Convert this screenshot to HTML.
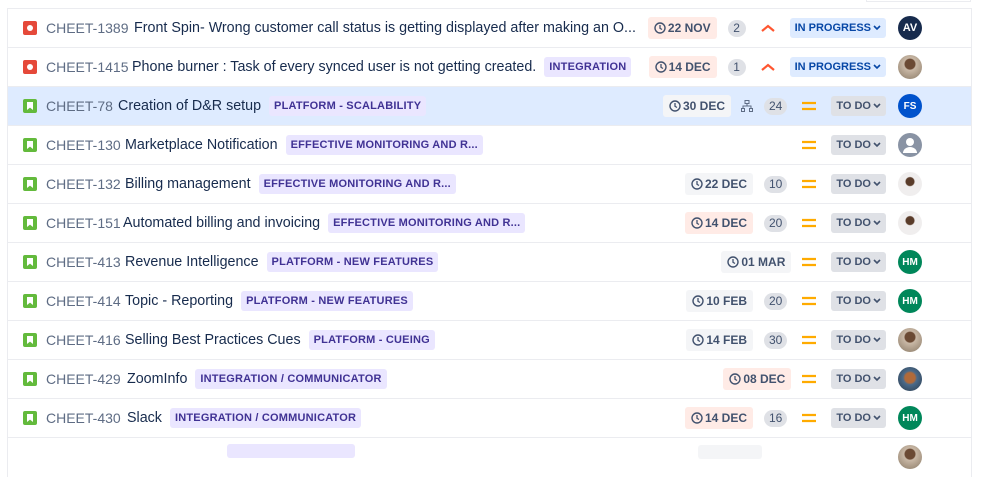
<!DOCTYPE html><html><head><style>
*{box-sizing:border-box;margin:0;padding:0}
body{width:999px;height:448px;overflow:hidden;background:#fff;font-family:"Liberation Sans",sans-serif;position:relative}
.wrap{position:absolute;left:7px;top:8px;width:965px;border-left:1px solid #ebecf0;border-right:1px solid #ebecf0;border-top:1px solid #ebecf0}
.row{height:39px;border-bottom:1px solid #ebecf0;position:relative;display:flex;align-items:center;font-size:14px;color:#172b4d;white-space:nowrap}
.sel{background:#deebff}
.ic{position:absolute;left:15px;top:12px;width:14px;height:14px;border-radius:2px}
.bug{background:#e5493a}.bug:after{content:"";position:absolute;left:4px;top:4px;width:6px;height:6px;border-radius:50%;background:#fff}
.st{background:#63ba3c}.st:after{content:"";position:absolute;left:4px;top:3px;width:6px;height:8px;background:#fff;clip-path:polygon(0 0,100% 0,100% 100%,50% 70%,0 100%)}
.key{position:absolute;left:38px;color:#5e6c84}
.t{display:flex;align-items:center;font-size:14.3px}
.lab{margin-left:8px;background:#eae6ff;color:#403294;font-size:11px;font-weight:bold;padding:4px 5px;border-radius:3px;letter-spacing:.2px}
.rg{position:absolute;right:85px;top:0;height:38px;display:flex;align-items:center}
.d{font-size:12px;font-weight:bold;color:#42526e;padding:4px 6px;border-radius:3px;display:flex;align-items:center;background:#f4f5f7}
.d.r{background:#ffebe6}
.d svg{margin-right:2px}
.c{margin-left:11px;background:#dfe1e6;color:#42526e;font-size:12px;border-radius:9px;height:17px;min-width:18px;padding:0 5px;display:flex;align-items:center;justify-content:center}
.p{margin-left:15px;width:14px;display:flex;align-items:center}
.s{margin-left:15px;background:#dfe1e6;color:#42526e;font-size:11px;font-weight:bold;padding:4px 5px;border-radius:3px;display:flex;align-items:center}
.s.ip{background:#deebff;color:#0747a6}
.s svg{margin-left:2px}
.av{position:absolute;left:890px;top:7px;width:24px;height:24px;border-radius:50%;color:#fff;font-size:10px;font-weight:bold;display:flex;align-items:center;justify-content:center}
.ph{background:radial-gradient(circle at 50% 38%,#6b4a34 0 5px,#c9b8a6 6px,#8a7a66 100%)}
.ph2{background:radial-gradient(circle at 50% 40%,#5a3c2a 0 4px,#f0eeee 5px)}
</style></head><body>
<div style="position:absolute;left:866px;top:0;width:105px;height:2px;border:1px solid #ebecf0;border-top:none"></div>
<div class="wrap">
<div class="row"><div class="ic bug"></div><span class="key">CHEET-1389</span><div class="t" style="margin-left:126px">Front Spin- Wrong customer call status is getting displayed after making an O...</div>
<div class="rg"><div class="d r"><svg width="12" height="12" viewBox="0 0 12 12"><circle cx="6" cy="6" r="5" fill="none" stroke="#42526e" stroke-width="1.4"/><path d="M6 3v3.3l2 1.2" fill="none" stroke="#42526e" stroke-width="1.3"/></svg>22 NOV</div><div class="c">2</div><div class="p"><svg width="14" height="8"><path d="M1 7l6-5 6 5" fill="none" stroke="#ff5630" stroke-width="2.2"/></svg></div><div class="s ip">IN PROGRESS<svg width="8" height="6"><path d="M1 1l3 3 3-3" fill="none" stroke="#0747a6" stroke-width="1.6"/></svg></div></div>
<div class="av" style="background:#172b4d;font-size:11px">AV</div></div>

<div class="row"><div class="ic bug"></div><span class="key">CHEET-1415</span><div class="t" style="margin-left:124px">Phone burner : Task of every synced user is not getting created.<span class="lab">INTEGRATION</span></div>
<div class="rg"><div class="d r"><svg width="12" height="12" viewBox="0 0 12 12"><circle cx="6" cy="6" r="5" fill="none" stroke="#42526e" stroke-width="1.4"/><path d="M6 3v3.3l2 1.2" fill="none" stroke="#42526e" stroke-width="1.3"/></svg>14 DEC</div><div class="c">1</div><div class="p"><svg width="14" height="8"><path d="M1 7l6-5 6 5" fill="none" stroke="#ff5630" stroke-width="2.2"/></svg></div><div class="s ip">IN PROGRESS<svg width="8" height="6"><path d="M1 1l3 3 3-3" fill="none" stroke="#0747a6" stroke-width="1.6"/></svg></div></div>
<div class="av ph"></div></div>

<div class="row sel"><div class="ic st"></div><span class="key">CHEET-78</span><div class="t" style="margin-left:110px">Creation of D&amp;R setup<span class="lab">PLATFORM - SCALABILITY</span></div>
<div class="rg"><div class="d"><svg width="12" height="12" viewBox="0 0 12 12"><circle cx="6" cy="6" r="5" fill="none" stroke="#42526e" stroke-width="1.4"/><path d="M6 3v3.3l2 1.2" fill="none" stroke="#42526e" stroke-width="1.3"/></svg>30 DEC</div><svg style="margin-left:10px" width="12" height="12" viewBox="0 0 12 12"><rect x="4" y="0.5" width="4" height="3" fill="none" stroke="#5e6c84"/><rect x="0.5" y="8.5" width="3" height="3" fill="none" stroke="#5e6c84"/><rect x="8.5" y="8.5" width="3" height="3" fill="none" stroke="#5e6c84"/><path d="M6 3.5v2.5M2 8.5V6h8v2.5" fill="none" stroke="#5e6c84"/></svg><div class="c">24</div><div class="p"><svg width="14" height="10"><path d="M0 2h14M0 8h14" stroke="#ffab00" stroke-width="2.2"/></svg></div><div class="s">TO DO<svg width="8" height="6"><path d="M1 1l3 3 3-3" fill="none" stroke="#42526e" stroke-width="1.6"/></svg></div></div>
<div class="av" style="background:#0052cc">FS</div></div>

<div class="row"><div class="ic st"></div><span class="key">CHEET-130</span><div class="t" style="margin-left:117px">Marketplace Notification<span class="lab">EFFECTIVE MONITORING AND R...</span></div>
<div class="rg"><div class="p"><svg width="14" height="10"><path d="M0 2h14M0 8h14" stroke="#ffab00" stroke-width="2.2"/></svg></div><div class="s">TO DO<svg width="8" height="6"><path d="M1 1l3 3 3-3" fill="none" stroke="#42526e" stroke-width="1.6"/></svg></div></div>
<div class="av" style="background:#8993a4"><svg width="24" height="24"><circle cx="12" cy="9" r="4" fill="#fff"/><path d="M5 20a7 6 0 0 1 14 0z" fill="#fff"/></svg></div></div>

<div class="row"><div class="ic st"></div><span class="key">CHEET-132</span><div class="t" style="margin-left:117px">Billing management<span class="lab">EFFECTIVE MONITORING AND R...</span></div>
<div class="rg"><div class="d"><svg width="12" height="12" viewBox="0 0 12 12"><circle cx="6" cy="6" r="5" fill="none" stroke="#42526e" stroke-width="1.4"/><path d="M6 3v3.3l2 1.2" fill="none" stroke="#42526e" stroke-width="1.3"/></svg>22 DEC</div><div class="c">10</div><div class="p"><svg width="14" height="10"><path d="M0 2h14M0 8h14" stroke="#ffab00" stroke-width="2.2"/></svg></div><div class="s">TO DO<svg width="8" height="6"><path d="M1 1l3 3 3-3" fill="none" stroke="#42526e" stroke-width="1.6"/></svg></div></div>
<div class="av ph2"></div></div>

<div class="row"><div class="ic st"></div><span class="key">CHEET-151</span><div class="t" style="margin-left:115px">Automated billing and invoicing<span class="lab">EFFECTIVE MONITORING AND R...</span></div>
<div class="rg"><div class="d r"><svg width="12" height="12" viewBox="0 0 12 12"><circle cx="6" cy="6" r="5" fill="none" stroke="#42526e" stroke-width="1.4"/><path d="M6 3v3.3l2 1.2" fill="none" stroke="#42526e" stroke-width="1.3"/></svg>14 DEC</div><div class="c">20</div><div class="p"><svg width="14" height="10"><path d="M0 2h14M0 8h14" stroke="#ffab00" stroke-width="2.2"/></svg></div><div class="s">TO DO<svg width="8" height="6"><path d="M1 1l3 3 3-3" fill="none" stroke="#42526e" stroke-width="1.6"/></svg></div></div>
<div class="av ph2"></div></div>

<div class="row"><div class="ic st"></div><span class="key">CHEET-413</span><div class="t" style="margin-left:117px">Revenue Intelligence<span class="lab">PLATFORM - NEW FEATURES</span></div>
<div class="rg"><div class="d"><svg width="12" height="12" viewBox="0 0 12 12"><circle cx="6" cy="6" r="5" fill="none" stroke="#42526e" stroke-width="1.4"/><path d="M6 3v3.3l2 1.2" fill="none" stroke="#42526e" stroke-width="1.3"/></svg>01 MAR</div><div class="p" style="margin-left:11px"><svg width="14" height="10"><path d="M0 2h14M0 8h14" stroke="#ffab00" stroke-width="2.2"/></svg></div><div class="s">TO DO<svg width="8" height="6"><path d="M1 1l3 3 3-3" fill="none" stroke="#42526e" stroke-width="1.6"/></svg></div></div>
<div class="av" style="background:#00875a">HM</div></div>

<div class="row"><div class="ic st"></div><span class="key">CHEET-414</span><div class="t" style="margin-left:117px">Topic - Reporting<span class="lab">PLATFORM - NEW FEATURES</span></div>
<div class="rg"><div class="d"><svg width="12" height="12" viewBox="0 0 12 12"><circle cx="6" cy="6" r="5" fill="none" stroke="#42526e" stroke-width="1.4"/><path d="M6 3v3.3l2 1.2" fill="none" stroke="#42526e" stroke-width="1.3"/></svg>10 FEB</div><div class="c">20</div><div class="p"><svg width="14" height="10"><path d="M0 2h14M0 8h14" stroke="#ffab00" stroke-width="2.2"/></svg></div><div class="s">TO DO<svg width="8" height="6"><path d="M1 1l3 3 3-3" fill="none" stroke="#42526e" stroke-width="1.6"/></svg></div></div>
<div class="av" style="background:#00875a">HM</div></div>

<div class="row"><div class="ic st"></div><span class="key">CHEET-416</span><div class="t" style="margin-left:117px">Selling Best Practices Cues<span class="lab">PLATFORM - CUEING</span></div>
<div class="rg"><div class="d"><svg width="12" height="12" viewBox="0 0 12 12"><circle cx="6" cy="6" r="5" fill="none" stroke="#42526e" stroke-width="1.4"/><path d="M6 3v3.3l2 1.2" fill="none" stroke="#42526e" stroke-width="1.3"/></svg>14 FEB</div><div class="c">30</div><div class="p"><svg width="14" height="10"><path d="M0 2h14M0 8h14" stroke="#ffab00" stroke-width="2.2"/></svg></div><div class="s">TO DO<svg width="8" height="6"><path d="M1 1l3 3 3-3" fill="none" stroke="#42526e" stroke-width="1.6"/></svg></div></div>
<div class="av ph"></div></div>

<div class="row"><div class="ic st"></div><span class="key">CHEET-429</span><div class="t" style="margin-left:119px">ZoomInfo<span class="lab">INTEGRATION / COMMUNICATOR</span></div>
<div class="rg"><div class="d r"><svg width="12" height="12" viewBox="0 0 12 12"><circle cx="6" cy="6" r="5" fill="none" stroke="#42526e" stroke-width="1.4"/><path d="M6 3v3.3l2 1.2" fill="none" stroke="#42526e" stroke-width="1.3"/></svg>08 DEC</div><div class="p" style="margin-left:11px"><svg width="14" height="10"><path d="M0 2h14M0 8h14" stroke="#ffab00" stroke-width="2.2"/></svg></div><div class="s">TO DO<svg width="8" height="6"><path d="M1 1l3 3 3-3" fill="none" stroke="#42526e" stroke-width="1.6"/></svg></div></div>
<div class="av" style="background:radial-gradient(circle at 50% 45%,#b06a3a 0 5px,#4a6a8a 7px,#2a3a4a)"></div></div>

<div class="row"><div class="ic st"></div><span class="key">CHEET-430</span><div class="t" style="margin-left:119px">Slack<span class="lab">INTEGRATION / COMMUNICATOR</span></div>
<div class="rg"><div class="d r"><svg width="12" height="12" viewBox="0 0 12 12"><circle cx="6" cy="6" r="5" fill="none" stroke="#42526e" stroke-width="1.4"/><path d="M6 3v3.3l2 1.2" fill="none" stroke="#42526e" stroke-width="1.3"/></svg>14 DEC</div><div class="c">16</div><div class="p"><svg width="14" height="10"><path d="M0 2h14M0 8h14" stroke="#ffab00" stroke-width="2.2"/></svg></div><div class="s">TO DO<svg width="8" height="6"><path d="M1 1l3 3 3-3" fill="none" stroke="#42526e" stroke-width="1.6"/></svg></div></div>
<div class="av" style="background:#00875a">HM</div></div>

<div class="row" style="border-bottom:none"><span class="lab" style="position:absolute;left:211px;top:6px;width:128px;height:14px;padding:0"></span><div class="d" style="position:absolute;left:690px;top:7px;width:64px;height:14px"></div><div class="av ph" style="top:7px"></div></div>
</div>
</body></html>
